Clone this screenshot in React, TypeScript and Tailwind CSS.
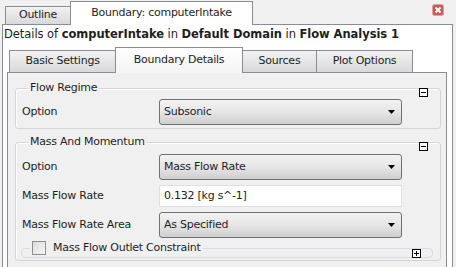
import React from "react";

const font = "font-['DejaVu_Sans',Verdana,sans-serif] text-[11px] tracking-[-0.25px] text-[#1e1e1e]";

function Collapse({ open }: { open: boolean }) {
  return (
    <svg width="9" height="9" viewBox="0 0 9 9" className="block">
      <rect x="0.5" y="0.5" width="8" height="8" fill="white" stroke="black" />
      <path d="M2 4.5h5" stroke="black" />
      {!open && <path d="M4.5 2v5" stroke="black" />}
    </svg>
  );
}

function Combo({ value }: { value: string }) {
  return (
    <div className="w-[243px] h-[26px] rounded-[3px] border border-[#707070] bg-gradient-to-b from-[#f2f2f2] via-[#e6e6e6] to-[#cfcfcf] flex items-center pl-[4px] pr-[6px]">
      <span className="flex-1">{value}</span>
      <svg width="7" height="4" viewBox="0 0 7 4"><path d="M0 0h7L3.5 4z" fill="black" /></svg>
    </div>
  );
}

function Row({ label, children }: { label: string; children: React.ReactNode }) {
  return (
    <div className="flex items-center">
      <span className="w-[137px]">{label}</span>
      {children}
    </div>
  );
}

const groupClass = "relative rounded-[3px] border border-[#d6d6d6] shadow-[inset_1px_1px_0_#ffffff]";

export default function App() {
  return (
    <div className={`w-[456px] h-[267px] overflow-hidden bg-[#f0f0f0] ${font}`}>
      {/* dock tabs */}
      <div className="flex items-end h-[25px] pl-[5px]">
        <div className="w-[65px] h-[19px] border border-[#898c95] border-r-0 bg-gradient-to-b from-[#f2f2f2] to-[#d9d9d9] flex items-center justify-center">
          Outline
        </div>
        <div className="relative z-10 w-[183px] h-[24px] border border-b-0 border-[#898c95] bg-white flex items-center justify-center">
          Boundary: computerIntake
        </div>
        <div className="ml-auto self-start mt-[4px] mr-[12px]">
          <svg width="12" height="12" viewBox="0 0 12 12" className="block">
            <rect x="0.5" y="0.5" width="11" height="11" rx="2" fill="#c85a5a" stroke="#e0a0a0" />
            <path d="M3.5 3.5l5 5M8.5 3.5l-5 5" stroke="white" strokeWidth="2" />
          </svg>
        </div>
      </div>

      <div className="-mt-px ml-[2px] w-[451px] h-[250px] border border-[#898c95] bg-white">
        <div className="h-[20px] flex items-center pl-[1px] text-[11.5px] tracking-[-0.05px]">
          Details of&nbsp;<b>computerIntake</b>&nbsp;in&nbsp;<b>Default Domain</b>&nbsp;in&nbsp;<b>Flow Analysis 1</b>
        </div>

        {/* inner tabs */}
        <div className="flex items-end h-[28px] pl-[6px]">
          <div className="w-[106px] h-[23px] border border-r-0 border-[#898c95] bg-gradient-to-b from-[#f2f2f2] to-[#d9d9d9] flex items-center justify-center">
            Basic Settings
          </div>
          <div className="relative z-10 w-[128px] h-[26px] border border-b-0 border-[#898c95] bg-gradient-to-b from-white to-[#f4f4f4] flex items-center justify-center">
            Boundary Details
          </div>
          <div className="w-[74px] h-[23px] border border-l-0 border-[#898c95] bg-gradient-to-b from-[#f2f2f2] to-[#d9d9d9] flex items-center justify-center">
            Sources
          </div>
          <div className="w-[96px] h-[23px] border border-l-0 border-[#898c95] bg-gradient-to-b from-[#f2f2f2] to-[#d9d9d9] flex items-center justify-center">
            Plot Options
          </div>
        </div>

        <div className="-mt-px ml-[4px] w-[440px] h-[200px] border border-[#898c95] bg-[#f0f0f0] pl-[7px] pt-[8px]">
          <fieldset className={`${groupClass} w-[426px] px-[6px] pt-[4px] pb-[3px]`}>
            <legend className="ml-[6px] px-[2px] leading-[14px]">Flow Regime</legend>
            <div className="absolute right-[12px] -top-[7px]"><Collapse open /></div>
            <Row label="Option"><Combo value="Subsonic" /></Row>
          </fieldset>

          <fieldset className={`${groupClass} mt-[6px] w-[426px] px-[6px] pt-[5px] pb-[2px]`}>
            <legend className="ml-[6px] px-[2px] leading-[14px]">Mass And Momentum</legend>
            <div className="absolute right-[12px] -top-[7px]"><Collapse open /></div>
            <div className="flex flex-col gap-[5px]">
              <Row label="Option"><Combo value="Mass Flow Rate" /></Row>
              <Row label="Mass Flow Rate">
                <div className="w-[243px] h-[22px] border border-[#dcdfe3] bg-white flex items-center pl-[4px]">0.132 [kg s^-1]</div>
              </Row>
              <Row label="Mass Flow Rate Area"><Combo value="As Specified" /></Row>
            </div>
            <fieldset className="relative mt-[3px] -ml-[1px] w-[412px] h-[17px] rounded-[4px] border border-[#d6dde4]">
              <legend className="ml-[8px] px-[2px] flex items-center gap-[7px] leading-[14px]">
                <span className="w-[14px] h-[14px] border border-[#8f8f8f] bg-gradient-to-br from-[#dcdcdc] to-[#f6f6f6]" />
                Mass Flow Outlet Constraint
              </legend>
              <div className="absolute right-[11px] -top-[6px]"><Collapse open={false} /></div>
            </fieldset>
          </fieldset>
        </div>
      </div>
    </div>
  );
}
